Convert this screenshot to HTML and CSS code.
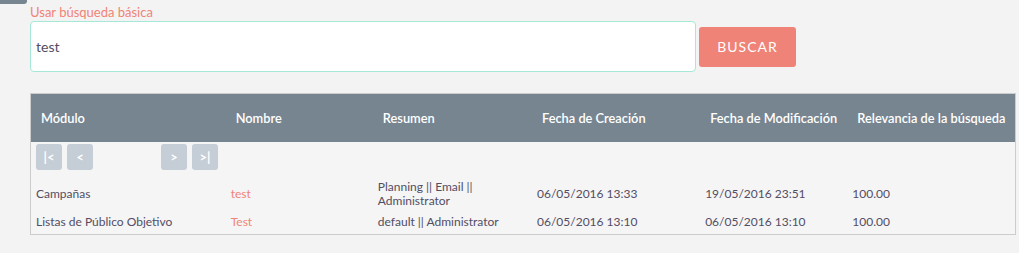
FILE: index.html
```html
<!DOCTYPE html>
<html lang="es">
<head>
  <meta charset="UTF-8" />
  <title>Búsqueda</title>
  <link rel="stylesheet" href="styles.css">
</head>
<body>
  <div class="top-tab"></div>
  <div class="search-area">
    <label class="search-label" for="query">Usar búsqueda básica</label>
    <div class="search-row">
      <input type="text" id="query" class="search-input" value="test" />
      <button class="search-btn">BUSCAR</button>
    </div>
  </div>

  <table class="results">
    <colgroup>
      <col class="c-mod" />
      <col class="c-name" />
      <col class="c-sum" />
      <col class="c-created" />
      <col class="c-modified" />
      <col class="c-rel" />
    </colgroup>
    <thead>
      <tr>
        <th>Módulo</th>
        <th>Nombre</th>
        <th>Resumen</th>
        <th>Fecha de Creación</th>
        <th>Fecha de Modificación</th>
        <th>Relevancia de la búsqueda</th>
      </tr>
    </thead>
    <tbody>
      <tr class="pager-row">
        <td colspan="6">
          <div class="pager">
            <button class="pg-btn">|&lt;</button>
            <button class="pg-btn">&lt;</button>
            <span class="pg-gap"></span>
            <button class="pg-btn">&gt;</button>
            <button class="pg-btn">&gt;|</button>
          </div>
        </td>
      </tr>
      <tr>
        <td>Campañas</td>
        <td><a href="#">test</a></td>
        <td>Planning || Email ||<br>Administrator</td>
        <td>06/05/2016 13:33</td>
        <td>19/05/2016 23:51</td>
        <td>100.00</td>
      </tr>
      <tr>
        <td>Listas de Público Objetivo</td>
        <td><a href="#">Test</a></td>
        <td>default || Administrator</td>
        <td>06/05/2016 13:10</td>
        <td>06/05/2016 13:10</td>
        <td>100.00</td>
      </tr>
    </tbody>
  </table>
</body>
</html>
```

FILE: styles.css
```css
body {
  font-family: Lato, 'Open Sans', sans-serif;
  background-color: #f3f3f3;
  color: #534d64;
  margin: 0;
  width: 1019px;
  height: 253px;
  overflow: hidden;
}

.top-tab {
  width: 27px;
  height: 4px;
  background-color: #778591;
  border-bottom-right-radius: 3px;
}

.search-area {
  padding-left: 30px;
}

.search-label {
  display: block;
  color: #f08377;
  font-size: 13px;
  line-height: 17px;
}

.search-row {
  display: flex;
  align-items: center;
  gap: 3px;
}

.search-input {
  width: 666px;
  height: 51px;
  box-sizing: border-box;
  border: 1px solid #a5e8d6;
  border-radius: 4px;
  background-color: #fff;
  padding: 0 5px;
  font-family: Lato, sans-serif;
  font-size: 14px;
  color: #534d64;
  outline: none;
}

.search-btn {
  width: 97px;
  height: 40px;
  border: none;
  border-radius: 3px;
  background-color: #f08377;
  color: #fff;
  font-family: Lato, sans-serif;
  font-size: 14px;
  letter-spacing: 1px;
  padding: 0;
}

.results {
  margin: 21px 0 0 30px;
  width: 986px;
  border: 1px solid #ccc;
  border-collapse: collapse;
  table-layout: fixed;
  background-color: #f5f5f5;
  font-size: 12px;
}

.c-mod { width: 195px; }
.c-name { width: 147px; }
.c-sum { width: 159px; }
.c-created { width: 168px; }
.c-modified { width: 147px; }
.c-rel { width: 168px; }

.results th {
  background-color: #778591;
  color: #fff;
  font-weight: 600;
  font-size: 12.8px;
  text-align: left;
  height: 48px;
  padding: 0 0 0 10px;
  white-space: nowrap;
}

.results td {
  padding: 2px 0 2px 5px;
  line-height: 14px;
  vertical-align: middle;
}

.results a {
  color: #f08377;
  text-decoration: none;
}

.pager-row td {
  padding: 2px 0 8px 5px;
}

.pager {
  display: flex;
  gap: 5px;
  height: 26px;
}

.pg-btn {
  width: 26px;
  height: 26px;
  border: none;
  border-radius: 3px;
  background-color: #c5cdd6;
  color: #fff;
  font-family: Lato, sans-serif;
  font-weight: bold;
  font-size: 13px;
  padding: 0;
}

.pg-gap {
  width: 58px;
}

.results tbody tr:nth-child(2) td {
  height: 27px;
}

.results tbody tr:nth-child(3) td {
  height: 20px;
}
```
